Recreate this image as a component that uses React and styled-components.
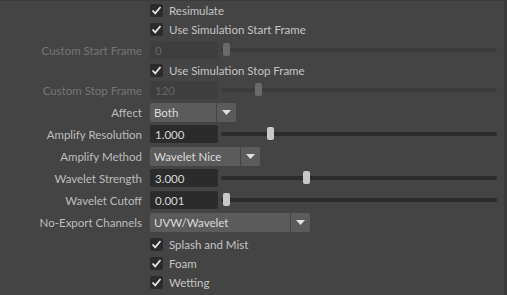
import React from "react";
import styled, { createGlobalStyle } from "styled-components";

const Global = createGlobalStyle`
  html, body { margin: 0; padding: 0; background: #444444; }
  body { font-family: Lato, "Noto Sans", sans-serif; }
`;

const Panel = styled.div`
  width: 507px;
  height: 295px;
  box-sizing: border-box;
  background: #444444;
  border-top: 1px solid #3c3c3c;
  border-right: 3px solid #3a3a3a;
  display: flex;
  flex-direction: column;
  padding-right: 7px;
  overflow: hidden;
  font-size: 11.5px;
`;

const Row = styled.div`
  display: flex;
  align-items: center;
  height: ${(p) => p.$h || 22}px;
  flex: none;
  margin-top: ${(p) => p.$mt || 0}px;
`;

const Label = styled.div`
  width: 142px;
  margin-right: 8px;
  text-align: right;
  white-space: nowrap;
  color: ${(p) => (p.$disabled ? "#767676" : "#bdbdbd")};
  flex: none;
`;

const Box = styled.span`
  width: 13px;
  height: 13px;
  border-radius: 2px;
  background: #2b2b2b;
  display: flex;
  align-items: center;
  justify-content: center;
  flex: none;
`;

const CheckText = styled.span`
  margin-left: 6px;
  color: #c4c4c4;
  white-space: nowrap;
`;

const Field = styled.div`
  width: 68px;
  height: 18px;
  box-sizing: border-box;
  border-radius: 2px;
  background: ${(p) => (p.$disabled ? "#3e3e3e" : "#2b2b2b")};
  color: ${(p) => (p.$disabled ? "#676767" : "#d6d6d6")};
  padding-left: 5px;
  display: flex;
  align-items: center;
  flex: none;
`;

const Track = styled.div`
  position: relative;
  flex: 1;
  height: 4px;
  margin-left: 3px;
  border-radius: 2px;
  background: ${(p) => (p.$disabled ? "#3c3c3c" : "#2b2b2b")};
`;

const Handle = styled.div`
  position: absolute;
  top: -5px;
  width: 7px;
  height: 13px;
  border-radius: 2px;
  background: ${(p) => (p.$disabled ? "#6a6a6a" : "#c8c8c8")};
`;

const Drop = styled.div`
  display: flex;
  height: 19px;
  gap: 1px;
  width: ${(p) => p.$w}px;
  flex: none;
`;

const DropMain = styled.div`
  flex: 1;
  background: #5b5b5b;
  border-radius: 2px 0 0 2px;
  color: #dcdcdc;
  padding-left: 4px;
  display: flex;
  align-items: center;
  white-space: nowrap;
`;

const DropArrow = styled.div`
  width: 19px;
  background: #5b5b5b;
  border-radius: 0 2px 2px 0;
  display: flex;
  align-items: center;
  justify-content: center;
`;

const Check = ({ label, h, mt }) => (
  <Row $h={h || 19} $mt={mt}>
    <Label />
    <Box>
      <svg width="11" height="11" viewBox="0 0 11 11">
        <polyline
          points="1.5,5.5 4.2,8.3 9.5,2"
          fill="none"
          stroke="#e6e6e6"
          strokeWidth="1.8"
        />
      </svg>
    </Box>
    <CheckText>{label}</CheckText>
  </Row>
);

const Slider = ({ label, value, pos, disabled }) => (
  <Row>
    <Label $disabled={disabled}>{label}</Label>
    <Field $disabled={disabled}>{value}</Field>
    <Track $disabled={disabled}>
      <Handle $disabled={disabled} style={{ left: pos }} />
    </Track>
  </Row>
);

const Dropdown = ({ label, value, w }) => (
  <Row>
    <Label>{label}</Label>
    <Drop $w={w}>
      <DropMain>{value}</DropMain>
      <DropArrow>
        <svg width="9" height="5" viewBox="0 0 9 5">
          <polygon points="0,0 9,0 4.5,5" fill="#e0e0e0" />
        </svg>
      </DropArrow>
    </Drop>
  </Row>
);

export default function App() {
  return (
    <>
      <Global />
      <Panel>
        <Check label="Resimulate" />
        <Check label="Use Simulation Start Frame" />
        <Slider label="Custom Start Frame" value="0" pos={2} disabled />
        <Check label="Use Simulation Stop Frame" h={18} />
        <Slider label="Custom Stop Frame" value="120" pos={34} disabled />
        <Dropdown label="Affect" value="Both" w={86} />
        <Slider label="Amplify Resolution" value="1.000" pos={46} />
        <Dropdown label="Amplify Method" value="Wavelet Nice" w={110} />
        <Slider label="Wavelet Strength" value="3.000" pos={82} />
        <Slider label="Wavelet Cutoff" value="0.001" pos={2} />
        <Dropdown label="No-Export Channels" value="UVW/Wavelet" w={160} />
        <Check label="Splash and Mist" mt={2} />
        <Check label="Foam" />
        <Check label="Wetting" />
      </Panel>
    </>
  );
}
